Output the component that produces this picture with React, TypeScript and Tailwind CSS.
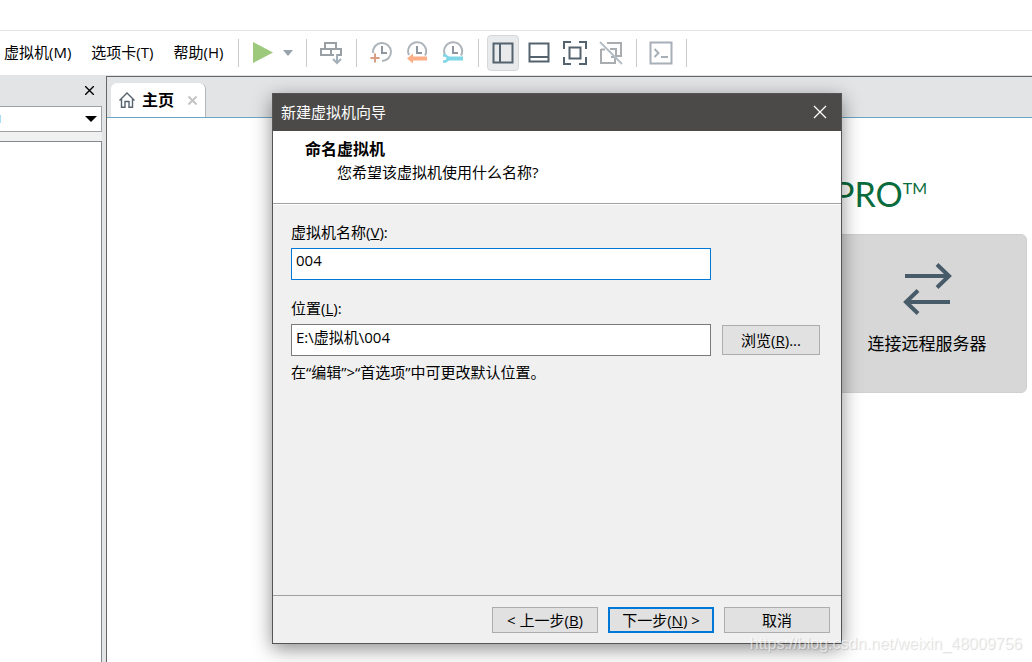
import { useState } from "react";
import type { ReactNode } from "react";

function Separator() {
  return <div className="ml-[9px] mr-2 h-7 w-px shrink-0 bg-[#c8cacc]" />;
}

function ToolButton({ label, active, children }: { label: string; active?: boolean; children: ReactNode }) {
  return (
    <button
      type="button"
      aria-label={label}
      aria-pressed={active}
      className={`flex h-9 w-8 shrink-0 items-center justify-center rounded border ${
        active ? "border-[#d5d7d9] bg-[#e9eaec]" : "border-transparent"
      }`}
    >
      {children}
    </button>
  );
}

function Icon({ children, color = "#55636f" }: { children: ReactNode; color?: string }) {
  return (
    <svg width="24" height="24" viewBox="0 0 24 24" fill="none" stroke={color} strokeWidth="2" className="shrink-0">
      {children}
    </svg>
  );
}

function Clock() {
  return (
    <>
      <path d="M4 14A9 9 0 1 1 20 14.500" stroke="#adb4ba" />
      <path d="M12 5v7h5" stroke="#8e979f" />
    </>
  );
}

function MenuBar() {
  return (
    <nav className="flex items-center gap-5 whitespace-nowrap pb-[2px] pl-1 pr-[6px]">
      <button type="button">虚拟机(M)</button>
      <button type="button">选项卡(T)</button>
      <button type="button">帮助(H)</button>
    </nav>
  );
}

function Toolbar() {
  return (
    <div className="flex items-center">
      <Separator />
      <ToolButton label="开机">
        <Icon>
          <path d="M2 1v21l20-10.500z" fill="#9dc97c" stroke="none" />
        </Icon>
      </ToolButton>
      <button type="button" aria-label="电源选项" className="flex h-9 w-[18px] items-center justify-center">
        <svg width="10" height="6" viewBox="0 0 10 6">
          <path d="M0 0h10L5 6z" fill="#98a2ab" />
        </svg>
      </button>
      <Separator />
      <ToolButton label="发送按键">
        <Icon color="#989fa5">
          <path d="M6 8V2h11v6M15 14H2V8h20v6h-4M12 8v6" />
          <path d="M18 13v9M14 18l4 4 4-4" stroke="#a3b0b9" />
        </Icon>
      </ToolButton>
      <Separator />
      <div className="flex gap-1">
        <ToolButton label="拍摄快照">
          <Icon>
            <path d="M4 12A9 9 0 1 1 13 20" stroke="#adb4ba" />
            <path d="M13 5v7h5" stroke="#8e979f" />
            <path d="M6 12.500v9M1.500 17h9" stroke="#d99d83" />
          </Icon>
        </ToolButton>
        <ToolButton label="恢复快照">
          <Icon>
            <Clock />
            <path d="M2 17.500l6-5v3h14v4H8v3z" fill="#fcae87" stroke="none" />
          </Icon>
        </ToolButton>
        <ToolButton label="管理快照">
          <Icon>
            <Clock />
            <path d="M2 14.500h2.500l2 1.500v3l-2 1.500H2" stroke="#7ed6e6" strokeWidth="2.500" />
            <path d="M7 17.500h15" stroke="#7ed6e6" strokeWidth="4" />
          </Icon>
        </ToolButton>
      </div>
      <Separator />
      <div className="flex gap-1">
        <ToolButton label="显示库" active>
          <Icon>
            <path d="M2.500 2.500h19v19h-19zM9 2v19" />
          </Icon>
        </ToolButton>
        <ToolButton label="显示缩略图栏">
          <Icon>
            <path d="M2.500 2.500h19v18h-19zM3 16h19" />
          </Icon>
        </ToolButton>
        <ToolButton label="全屏">
          <Icon>
            <path d="M6.500 6.500h11v11h-11zM1 8V1h7M16 1h7v7M23 16v7h-7M8 23H1v-7" />
          </Icon>
        </ToolButton>
        <ToolButton label="Unity 模式">
          <Icon color="#aaadb0">
            <path d="M8 2h14v13h-5M2 8v14h14v-5M2 8.500h4M11 8h6v8h-5" />
            <path d="M1 1l22 22" stroke="#b5bec5" />
          </Icon>
        </ToolButton>
      </div>
      <Separator />
      <ToolButton label="控制台">
        <Icon color="#a7b0b7">
          <path d="M1.500 1.500h21v21h-21z" />
          <path d="M5.500 8l4 4-4 4M12 16h7" />
        </Icon>
      </ToolButton>
      <Separator />
    </div>
  );
}

function Library() {
  return (
    <aside className="flex w-[106px] shrink-0 flex-col bg-[#e3e4e6] pr-1">
      <div className="flex h-[30px] items-center justify-end pb-px pr-2">
        <button type="button" aria-label="关闭库">
          <svg width="9" height="9" viewBox="0 0 9 9" stroke="#000" strokeWidth="1.400">
            <path d="M0 0l9 9M9 0L0 9" />
          </svg>
        </button>
      </div>
      <div className="flex h-[26px] items-center justify-between border border-l-0 border-[#a0a2a5] bg-white pr-1">
        <span className="h-2 w-px bg-[#a9dcf5]" />
        <button type="button" aria-label="展开搜索">
          <svg width="12" height="6" viewBox="0 0 12 6">
            <path d="M0 0h12L6 6z" fill="#000" />
          </svg>
        </button>
      </div>
      <div className="h-[9px] bg-[#f0f0f0]" />
      <div className="flex-1 border-r border-t border-[#828790] bg-white" />
    </aside>
  );
}

function HomeTab() {
  return (
    <div className="flex h-[41px] items-end border-b border-[#6aa5c4] bg-[#e3e4e6] pl-1">
      <div className="flex h-[34px] items-center rounded-t-md border-r border-[#b4b6b8] bg-white px-2">
        <svg width="16" height="16" viewBox="0 0 16 16" fill="none" stroke="#55636f" strokeWidth="1.400">
          <path d="M0.500 8.500L8 1l7.500 7.500M2.500 7v8.300h3.500V9.500h4v5.800h3.500V7" />
        </svg>
        <span className="ml-[7px] pb-px text-[16px] font-semibold text-black">主页</span>
        <button type="button" aria-label="关闭标签" className="ml-[14px]">
          <svg width="9" height="9" viewBox="0 0 9 9" stroke="#c4c4c4" strokeWidth="2">
            <path d="M0.500 0.500l8 8M8.500 0.500l-8 8" />
          </svg>
        </button>
      </div>
    </div>
  );
}

function Home() {
  return (
    <main className="flex min-w-0 flex-1 flex-col border-l border-t border-[#666] bg-white">
      <HomeTab />
      <div className="flex flex-col items-end pr-[5px] pt-[52px]">
        <h1 className="flex items-start pr-[100px] font-['Lato',sans-serif] text-[34px] font-normal leading-[48px] text-[#0a6b3c]">
          PRO<span className="text-[16px] leading-9">TM</span>
        </h1>
        <button
          type="button"
          className="mt-4 flex h-[159px] w-[200px] flex-col items-center rounded-md border border-[#d0d0d0] bg-[#d7d7d7] pt-7 text-[17px] leading-6 text-black"
        >
          <svg width="50" height="52" viewBox="0 0 50 52" fill="none" stroke="#485b69" strokeWidth="4">
            <path d="M3 13h45M35 1.500L47 13 35 24.500M48 39H4M16 27.500L4 39l12 11.500" />
          </svg>
          <span className="mt-[17px]">连接远程服务器</span>
        </button>
      </div>
    </main>
  );
}

const dialogButton = "border border-[#adadad] bg-[#e1e1e1] leading-5 text-black";

function WizardDialog() {
  const [name, setName] = useState("004");
  const [location, setLocation] = useState("E:\\虚拟机\\004");

  return (
    <section
      role="dialog"
      aria-labelledby="wizard-title"
      className="absolute left-[272px] top-[93px] w-[570px] border border-[#555] bg-[#f0f0f0] text-black shadow-[0_5px_18px_rgba(0,0,0,0.45)]"
    >
      <header className="flex h-[37px] items-center justify-between bg-[#4c4a48] pb-[2px] pl-2 pr-[14px] text-white">
        <h2 id="wizard-title">新建虚拟机向导</h2>
        <button type="button" aria-label="关闭">
          <svg width="14" height="14" viewBox="0 0 14 14" stroke="#fff" strokeWidth="1.300">
            <path d="M1 1l12 12M13 1L1 13" />
          </svg>
        </button>
      </header>
      <div className="h-[73px] border-b border-[#a0a0a0] bg-white pl-8 pt-2">
        <h3 className="text-[16px] font-bold leading-5">命名虚拟机</h3>
        <p className="pl-8 pt-px leading-6">您希望该虚拟机使用什么名称?</p>
      </div>
      <div className="flex h-[391px] flex-col border-t border-white pl-[18px] pr-[21px] pt-[15px]">
        <label htmlFor="vm-name" className="leading-6">
          虚拟机名称(<u>V</u>):
        </label>
        <input
          id="vm-name"
          value={name}
          onChange={(e) => setName(e.target.value)}
          className="mt-1 h-8 w-[420px] border border-[#0078d7] bg-white px-1 pb-2 outline-none"
        />
        <label htmlFor="vm-location" className="mt-4 leading-6">
          位置(<u>L</u>):
        </label>
        <div className="mt-1 flex items-center justify-between">
          <input
            id="vm-location"
            value={location}
            onChange={(e) => setLocation(e.target.value)}
            className="h-8 w-[420px] border border-[#7a7a7a] bg-white px-1 pb-2 outline-none"
          />
          <button type="button" className={`${dialogButton} h-[30px] w-[98px]`}>
            浏览(<u>R</u>)...
          </button>
        </div>
        <p className="mt-1 leading-6">在“编辑”&gt;“首选项”中可更改默认位置。</p>
      </div>
      <footer className="flex justify-end gap-[10px] border-t border-[#a0a0a0] pb-[10px] pr-[11px] pt-[11px]">
        <button type="button" className={`${dialogButton} h-[26px] w-[106px]`}>
          &lt; 上一步(<u>B</u>)
        </button>
        <button
          type="button"
          className="h-[26px] w-[106px] border-2 border-[#0078d7] bg-[#e1e1e1] leading-5 text-black"
        >
          下一步(<u>N</u>) &gt;
        </button>
        <button type="button" className={`${dialogButton} h-[26px] w-[106px]`}>
          取消
        </button>
      </footer>
    </section>
  );
}

export default function App() {
  return (
    <div className="relative flex min-h-screen flex-col overflow-hidden bg-white font-['Open_Sans','Noto_Sans_CJK_SC',sans-serif] text-[15px] leading-5 text-black">
      <div className="h-[30px]" />
      <div className="flex h-[46px] items-center border-y border-[#e2e3e4]">
        <MenuBar />
        <Toolbar />
      </div>
      <div className="flex flex-1">
        <Library />
        <Home />
      </div>
      <WizardDialog />
      <span className="absolute bottom-2 right-[10px] font-['Liberation_Sans',sans-serif] text-[16px] leading-5 text-white/60 [text-shadow:1px_1px_1px_rgba(0,0,0,0.15)]">
        https://blog.csdn.net/weixin_48009756
      </span>
    </div>
  );
}
